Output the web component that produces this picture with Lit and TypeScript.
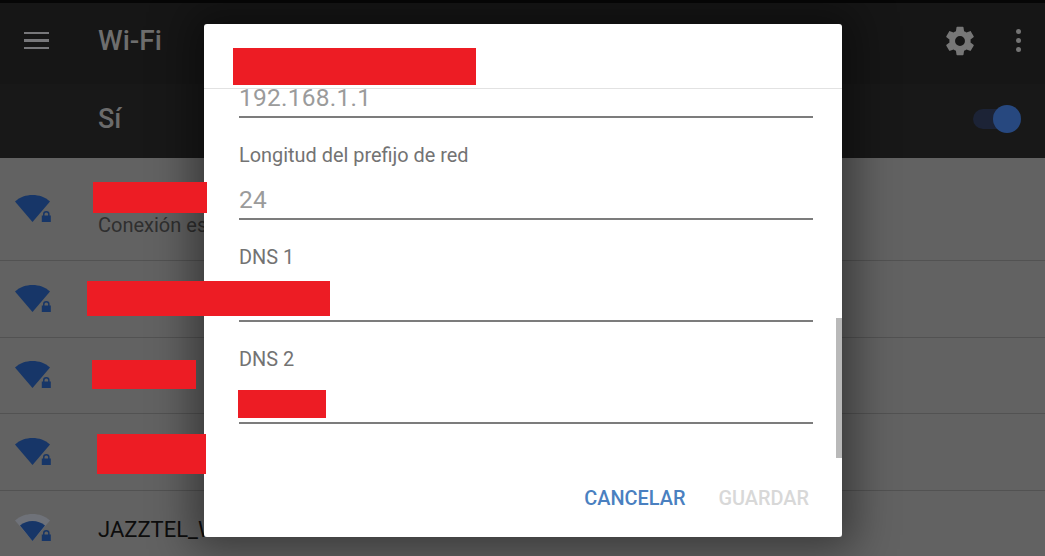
import { LitElement, html, css, svg } from "lit";
import { customElement } from "lit/decorators.js";

const wifi = (weak: boolean) => html`<svg class="wifi" viewBox="0 0 36 30" width="36" height="30">
  ${weak
    ? svg`<path d="M0 7.500C5 3 11 1 17.500 1s12.500 2 17.500 6.500L17.500 28z" fill="#6f7279"/>
          <path d="M5 12.500C8.500 9.600 12.800 8 17.500 8s9 1.600 12.500 4.500L17.500 28z" fill="#173668"/>`
    : svg`<path d="M0 7.500C5 3 11 1 17.500 1s12.500 2 17.500 6.500L17.500 28z" fill="#173668"/>`}
  <path d="M28 21.500v-1.300a3.300 3.300 0 0 1 6.600 0v1.300h1.200v6.500h-9v-6.500zm1.500 0h3.600v-1.300a1.800 1.800 0 0 0-3.600 0z" fill="#173668" fill-rule="evenodd" stroke="#626262" stroke-width="1.200" paint-order="stroke"/>
</svg>`;

@customElement("app-root")
export class AppRoot extends LitElement {
  static styles = css`
    :host { display: block; width: 1045px; height: 556px; position: relative; overflow: hidden; background: #626262; font-family: Roboto, "Liberation Sans", sans-serif; }
    .appbar { height: 75px; padding-bottom: 6px; background: #161616; display: flex; align-items: center; border-top: 3px solid #060606; }
    .menu { margin-left: 24px; width: 25px; display: flex; flex-direction: column; gap: 5px; }
    .menu i { display: block; height: 2.500px; background: #77777a; }
    .title { margin-left: 49px; font-size: 28px; font-weight: 500; color: #6e6e6e; flex: 1; }
    .gear { margin-right: 39px; }
    .dots { margin-right: 24px; display: flex; flex-direction: column; gap: 3.500px; }
    .dots i { width: 5.500px; height: 5.500px; border-radius: 50%; background: #747474; }
    .sub { height: 70px; padding: 0 0 4px 98px; background: #181818; display: flex; align-items: center; color: #6b6b6b; font-size: 27px; font-weight: 500; }
    .sub span { flex: 1; }
    .toggle { width: 48px; height: 28px; margin-right: 24px; position: relative; }
    .track { position: absolute; left: 0; right: 6px; top: 4px; height: 20px; border-radius: 10px; background: #1c2336; }
    .knob { position: absolute; right: 0; top: 0; width: 28px; height: 28px; border-radius: 50%; background: #27487f; }
    .row { height: 76.500px; border-bottom: 1px solid #525252; box-sizing: border-box; display: flex; align-items: center; padding-left: 15px; background: #626262; }
    .row.first { height: 103px; }
    .wifi { flex: none; margin-right: 47px; }
    .ssid { color: #0d0d0d; font-size: 22px; white-space: nowrap; margin-top: 3px; }
    .status { color: #2f2f2f; font-size: 20px; white-space: nowrap; margin-top: 32px; }
    .red { position: absolute; background: #ed1c24; z-index: 3; }
    .scrim { position: absolute; left: 204px; top: 24px; width: 638px; height: 513px; box-shadow: 0 0 40px 12px rgba(0,0,0,.42); }
    .dialog { position: absolute; left: 204px; top: 24px; width: 638px; height: 513px; background: #fff; border-radius: 3px; display: flex; flex-direction: column; overflow: hidden; z-index: 2; }
    .head { height: 65px; flex: none; border-bottom: 1px solid #e2e2e2; box-sizing: border-box; }
    .body { flex: none; height: 369px; padding: 0 29px 0 35px; position: relative; display: flex; flex-direction: column; }
    .field { height: 102px; box-sizing: border-box; border-bottom: 2px solid #7c7c7c; display: flex; flex-direction: column; flex: none; }
    .field.top { height: 29px; justify-content: flex-end; }
    label { display: block; color: #737373; font-size: 19.900px; line-height: 22px; margin-top: 27px; }
    .val { color: #9b9b9b; font-size: 24.500px; line-height: 28px; margin-top: auto; padding-bottom: 4px; letter-spacing: .25px; }
    .scroll { position: absolute; right: 0; top: 229px; width: 6px; height: 140px; background: #b9b9b9; }
    .foot { flex: 1; display: flex; justify-content: flex-end; align-items: center; gap: 33px; padding: 1px 33px 0 0; font-size: 19.900px; font-weight: 500; }
    .cancel { color: #4a80c0; }
    .save { color: #d8d8d8; }
  `;

  render() {
    return html`
      <div class="appbar">
        <div class="menu"><i></i><i></i><i></i></div>
        <div class="title">Wi-Fi</div>
        <svg class="gear" viewBox="0 0 24 24" width="34" height="34"><path fill="#777" fill-rule="evenodd" d="M19.430 12.980c.04-.32.07-.64.07-.98s-.03-.66-.07-.98l2.110-1.650c.19-.15.24-.42.12-.64l-2-3.460c-.12-.22-.39-.3-.61-.22l-2.490 1c-.52-.4-1.080-.73-1.690-.98l-.38-2.650A.488.488 0 0 0 14 2h-4c-.25 0-.46.18-.49.420l-.38 2.650c-.61.25-1.170.59-1.690.98l-2.490-1c-.23-.09-.49 0-.61.220l-2 3.460c-.13.22-.07.49.12.64l2.110 1.650c-.04.32-.07.65-.07.98s.03.66.07.98l-2.110 1.650c-.19.15-.24.42-.12.64l2 3.460c.12.22.39.3.61.22l2.490-1c.52.4 1.080.73 1.690.98l.38 2.650c.03.24.24.42.49.42h4c.25 0 .46-.18.49-.42l.38-2.650c.61-.25 1.170-.59 1.690-.98l2.490 1c.23.09.49 0 .61-.22l2-3.460c.12-.22.07-.49-.12-.64l-2.110-1.650zM12 15.500a3.500 3.500 0 1 1 0-7 3.500 3.500 0 0 1 0 7z"/></svg>
        <div class="dots"><i></i><i></i><i></i></div>
      </div>
      <div class="sub"><span>Sí</span><div class="toggle"><div class="track"></div><div class="knob"></div></div></div>
      <div class="row first">${wifi(false)}<div class="status">Conexión establecida</div></div>
      <div class="row">${wifi(false)}</div>
      <div class="row">${wifi(false)}</div>
      <div class="row">${wifi(false)}</div>
      <div class="row">${wifi(true)}<div class="ssid">JAZZTEL_W</div></div>
      <div class="scrim"></div>
      <div class="dialog">
        <div class="head"></div>
        <div class="body">
          <div class="field top"><div class="val">192.168.1.1</div></div>
          <div class="field"><label>Longitud del prefijo de red</label><div class="val">24</div></div>
          <div class="field"><label>DNS 1</label></div>
          <div class="field"><label>DNS 2</label></div>
          <div class="scroll"></div>
        </div>
        <div class="foot"><span class="cancel">CANCELAR</span><span class="save">GUARDAR</span></div>
      </div>
      <div class="red" style="left:233px;top:48px;width:243px;height:37px"></div>
      <div class="red" style="left:93px;top:182px;width:114px;height:31px"></div>
      <div class="red" style="left:87px;top:281px;width:243px;height:35px"></div>
      <div class="red" style="left:92px;top:360px;width:104px;height:29px"></div>
      <div class="red" style="left:238px;top:390px;width:88px;height:28px"></div>
      <div class="red" style="left:97px;top:434px;width:109px;height:40px"></div>
    `;
  }
}
